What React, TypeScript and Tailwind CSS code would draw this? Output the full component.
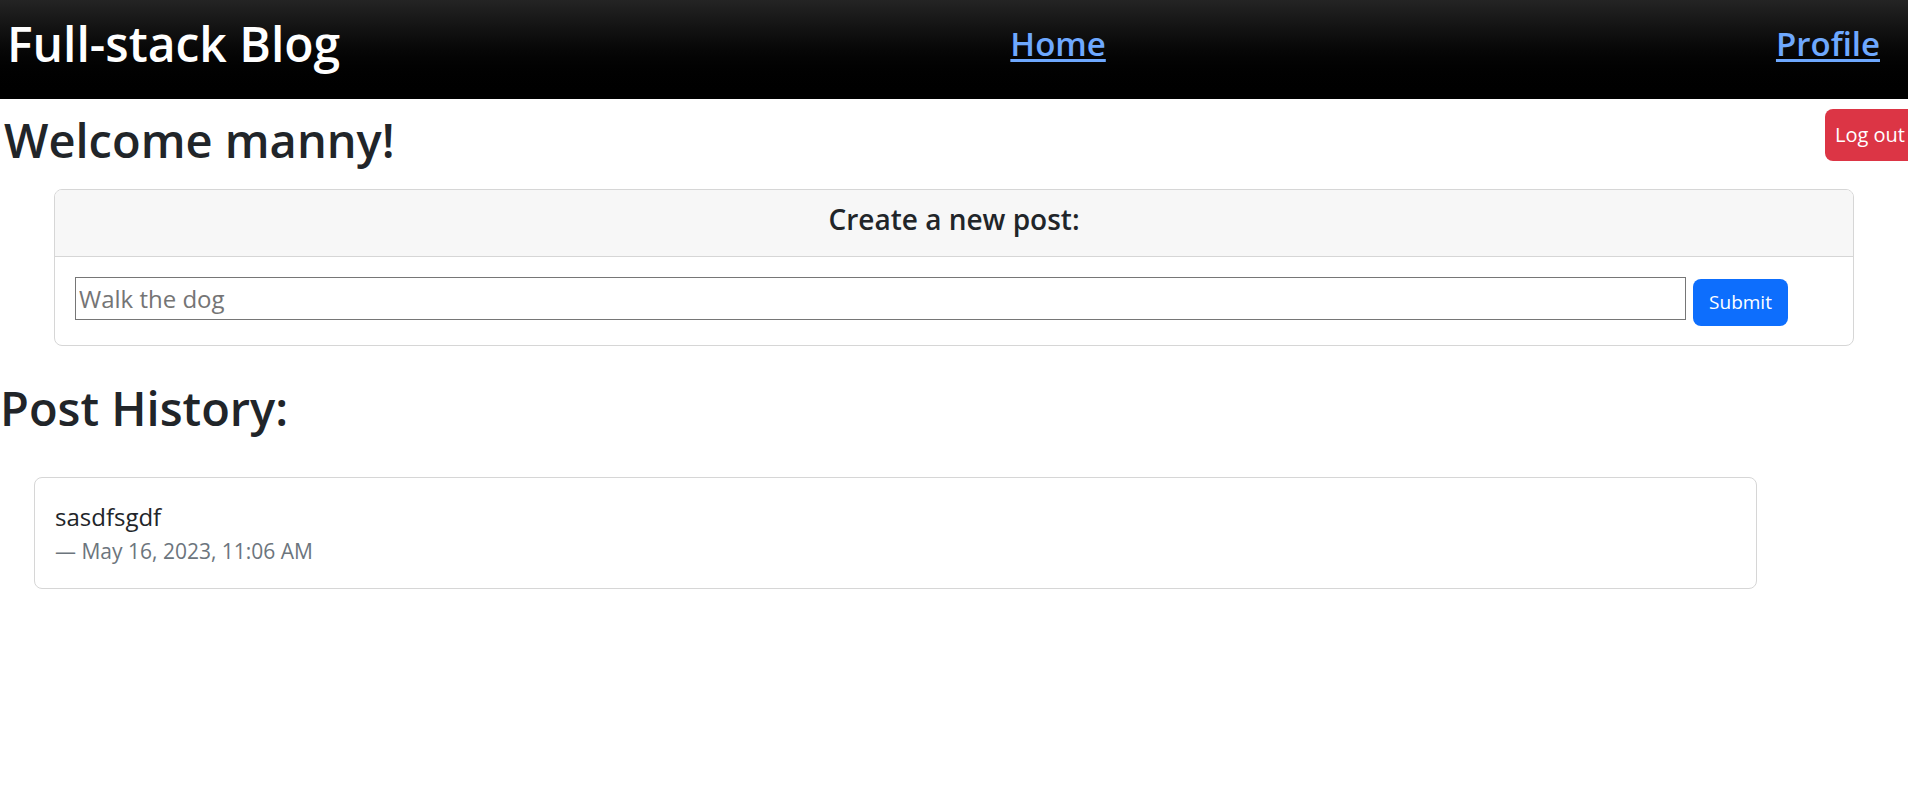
import { useState } from 'react'

interface Post {
  id: number
  text: string
  date: string
}

const posts: Post[] = [{ id: 1, text: 'sasdfsgdf', date: 'May 16, 2023, 11:06 AM' }]

function NavBar() {
  return (
    <header className="flex h-[99px] items-start justify-between bg-gradient-to-b from-[#242424] to-black pl-[7px] pr-[28px]">
      <h1 className="mt-[14px] text-[48px] font-semibold leading-[60px] text-white">Full-stack Blog</h1>
      <a href="#" className="mt-[24px] text-[33px] font-semibold leading-[40px] text-[#6ea8fe] underline underline-offset-[3px]">
        Home
      </a>
      <a href="#" className="mt-[24px] text-[33px] font-semibold leading-[40px] text-[#6ea8fe] underline underline-offset-[3px]">
        Profile
      </a>
    </header>
  )
}

export default function App() {
  const [draft, setDraft] = useState('')

  return (
    <div className="min-h-screen overflow-x-hidden bg-white font-['Open_Sans',sans-serif] text-[#212529]">
      <NavBar />

      {/* greeting + log out */}
      <div className="flex items-start justify-between pl-[4px] pt-[10px]">
        <h1 className="mt-[1px] text-[47px] font-semibold leading-[60px]">Welcome manny!</h1>
        <button className="-mr-[9px] h-[52px] rounded-[8px] bg-[#dc3545] pl-[10px] pr-[12px] text-[20px] text-white">
          Log out
        </button>
      </div>

      {/* new post card */}
      <div className="mx-[54px] mt-[19px] overflow-hidden rounded-[8px] border border-[#d6d6d6]">
        <div className="flex h-[67px] items-center justify-center border-b border-[#d6d6d6] bg-[#f7f7f7] pb-[8px]">
          <h4 className="text-[28px] font-semibold leading-[34px]">Create a new post:</h4>
        </div>
        <div className="flex items-start gap-[7px] pb-[19px] pl-[20px] pr-[65px] pt-[20px]">
          <input
            value={draft}
            onChange={(e) => setDraft(e.target.value)}
            placeholder="Walk the dog"
            className="h-[43px] flex-1 border border-[#767676] pl-[3px] text-[24px] outline-none placeholder:text-[#757575]"
          />
          <button className="mt-[2px] h-[47px] w-[95px] rounded-[8px] bg-[#0d6efd] text-[19px] text-white">Submit</button>
        </div>
      </div>

      <h1 className="mt-[32px] text-[47px] font-semibold leading-[60px]">Post History:</h1>

      <div className="ml-[34px] mr-[151px] mt-[39px]">
        {posts.map((p) => (
          <div key={p.id} className="rounded-[8px] border border-[#d6d6d6] p-[20px]">
            <blockquote>
              <p className="text-[24px] leading-[37px]">{p.text}</p>
              <footer className="text-[21px] leading-[33px] text-[#6c757d]">— {p.date}</footer>
            </blockquote>
          </div>
        ))}
      </div>
    </div>
  )
}
